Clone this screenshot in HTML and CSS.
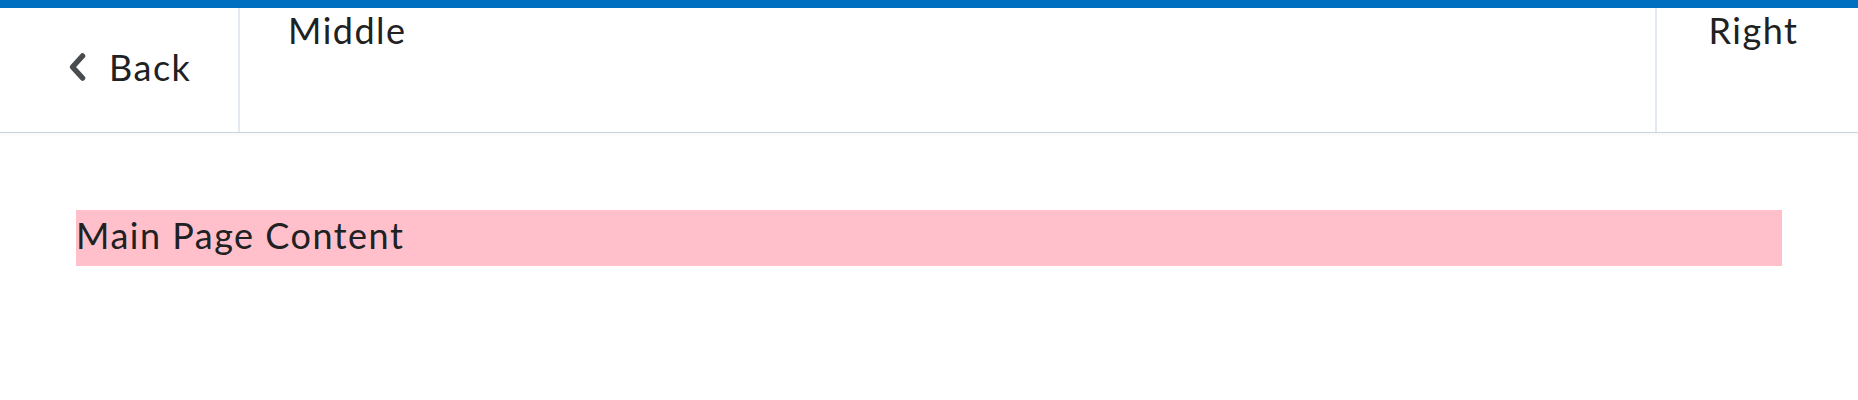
FILE: index.html
```html
<!DOCTYPE html>
<html>
<head>
<meta charset="utf-8">
<link rel="stylesheet" href="styles.css">
</head>
<body>
<div class="topbar"></div>
<header class="header">
  <div class="left">
    <a class="back">
      <svg class="chev" width="20" height="30" viewBox="0 0 20 30"><path d="M15.5 4 L5.5 15 L15.5 26" fill="none" stroke="#494c4e" stroke-width="5.5" stroke-linecap="round" stroke-linejoin="round"/></svg>
      <span class="back-text">Back</span>
    </a>
  </div>
  <div class="middle">Middle</div>
  <div class="right">Right</div>
</header>
<main class="main">
  <div class="content">Main Page Content</div>
</main>
</body>
</html>
```
FILE: styles.css
```css
html, body {
  margin: 0;
  padding: 0;
  background: #ffffff;
}
body {
  font-family: Lato, "Noto Sans", sans-serif;
  color: #202122;
  font-size: 36px;
  font-weight: 400;
  letter-spacing: 1.5px;
  line-height: 48px;
}
.topbar {
  height: 8px;
  background: #006fbf;
}
.header {
  display: flex;
  height: 125px;
  border-bottom: 1px solid #cdd5dc;
  box-shadow: 0 2px 4px rgba(0, 0, 0, 0.03);
  box-sizing: border-box;
}
.left {
  width: 240px;
  flex: none;
  border-right: 2px solid #e3e9f1;
  display: flex;
  align-items: center;
  padding-left: 67px;
  padding-bottom: 6px;
  box-sizing: border-box;
}
.back {
  display: flex;
  align-items: center;
  gap: 22px;
}
.chev {
  display: block;
}
.middle {
  flex: 1;
  padding-left: 48px;
  line-height: 44px;
}
.right {
  width: 203px;
  flex: none;
  border-left: 2px solid #e3e9f1;
  box-sizing: border-box;
  text-align: center;
  padding-right: 8px;
  line-height: 44px;
}
.main {
  padding: 77px 76px;
}
.content {
  background: #ffc0cb;
  height: 56px;
  padding-top: 1px;
  box-sizing: border-box;
}
```
